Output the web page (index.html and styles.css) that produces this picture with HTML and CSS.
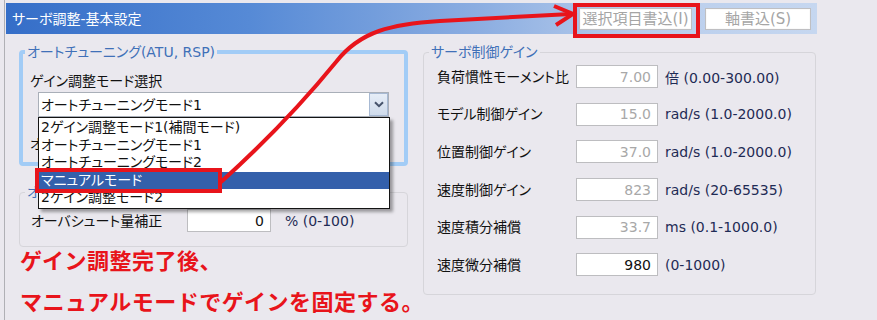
FILE: index.html
```html
<!DOCTYPE html>
<html lang="ja">
<head>
    <meta charset="UTF-8">
    <meta name="viewport" content="width=device-width, initial-scale=1.0">
    <title>サーボ調整-基本設定</title>
    <link rel="stylesheet" href="styles.css">
</head>
<body>
    <div class="window">
        <div class="titlebar">
            <span class="title">サーボ調整-基本設定</span>
            <div class="tb-buttons">
                <button class="tb-btn wide" disabled>選択項目書込(I)</button>
                <button class="tb-btn" disabled>軸書込(S)</button>
            </div>
        </div>

        <div class="content">
            <div class="col-left">
                <fieldset class="grp focus">
                    <legend>オートチューニング(ATU, RSP)</legend>
                    <div class="grp-body atu">
                        <div class="lbl">ゲイン調整モード選択</div>
                        <div class="combo">
                            <span class="combo-text">オートチューニングモード1</span>
                            <span class="combo-btn">
                                <svg width="10" height="7" viewBox="0 0 10 7"><path d="M1 1.2 L5 5.2 L9 1.2" fill="none" stroke="#46536b" stroke-width="2"/></svg>
                            </span>
                            <ul class="combo-list">
                                <li>2ゲイン調整モード1(補間モード)</li>
                                <li>オートチューニングモード1</li>
                                <li>オートチューニングモード2</li>
                                <li class="sel">マニュアルモード</li>
                                <li>2ゲイン調整モード2</li>
                            </ul>
                        </div>
                        <!-- rest of this label is hidden behind the open list -->
                        <div class="lbl under">オ</div>
                    </div>
                </fieldset>

                <fieldset class="grp over">
                    <legend class="under-list">オ</legend>
                    <div class="grp-body row">
                        <span class="lbl over-lbl">オーバシュート量補正</span>
                        <input class="num over-num" type="text" value="0">
                        <span class="unit over-unit">% (0-100)</span>
                    </div>
                </fieldset>

                <div class="note">
                    <p>ゲイン調整完了後、</p>
                    <p>マニュアルモードでゲインを固定する。</p>
                </div>
            </div>

            <fieldset class="grp gains">
                <legend>サーボ制御ゲイン</legend>
                <div class="grp-body rows">
                    <div class="row"><span class="lbl gl">負荷慣性モーメント比</span><input class="num dis" type="text" value="7.00" readonly><span class="unit">倍 (0.00-300.00)</span></div>
                    <div class="row"><span class="lbl gl">モデル制御ゲイン</span><input class="num dis" type="text" value="15.0" readonly><span class="unit">rad/s (1.0-2000.0)</span></div>
                    <div class="row"><span class="lbl gl">位置制御ゲイン</span><input class="num dis" type="text" value="37.0" readonly><span class="unit">rad/s (1.0-2000.0)</span></div>
                    <div class="row"><span class="lbl gl">速度制御ゲイン</span><input class="num dis" type="text" value="823" readonly><span class="unit">rad/s (20-65535)</span></div>
                    <div class="row"><span class="lbl gl">速度積分補償</span><input class="num dis" type="text" value="33.7" readonly><span class="unit">ms (0.1-1000.0)</span></div>
                    <div class="row"><span class="lbl gl">速度微分補償</span><input class="num" type="text" value="980"><span class="unit">(0-1000)</span></div>
                </div>
            </fieldset>
        </div>
    </div>

    <!-- annotation layer -->
    <svg class="marks" width="877" height="320" viewBox="0 0 877 320">
        <rect x="575" y="5" width="123" height="31" fill="none" stroke="#e8141b" stroke-width="4"/>
        <rect x="37" y="170" width="183" height="21" fill="none" stroke="#e8141b" stroke-width="4"/>
        <path d="M221 182 C262 145 305 100 336 62 C360 31 392 24 440 21 L571 14" fill="none" stroke="#e8141b" stroke-width="4"/>
        <path d="M554 6 L573 14 L556 25" fill="none" stroke="#e8141b" stroke-width="4"/>
    </svg>
</body>
</html>
```

FILE: styles.css
```css
body {
    margin: 0;
    background-color: #eae8ee;
    font-family: "DejaVu Sans", "Noto Sans CJK JP", sans-serif;
    font-size: 14px;
    font-feature-settings: "palt" 1;
    color: #111;
    width: 877px;
    height: 320px;
    overflow: hidden;
}
.window {
    margin-left: 4px;
    border-left: 1px solid #b0b0b5;
    height: 320px;
    padding-top: 3px;
    box-sizing: border-box;
}
.titlebar {
    margin-left: 1px;
    width: 811px;
    height: 31px;
    display: flex;
    align-items: center;
    padding: 0 6px;
    box-sizing: border-box;
    background: linear-gradient(90deg, #356ec8 0%, #568ad6 30%, #8badE1 58%, #b8cdec 78%, #c6d7f0 100%);
}
.title {
    color: #fff;
    line-height: 16px;
}
.tb-buttons {
    margin-left: auto;
    display: flex;
    gap: 13px;
}
.tb-btn {
    width: 106px;
    height: 22px;
    padding: 0;
    font: inherit;
    font-size: 15px;
    line-height: 18px;
    color: #a5a5a5;
    background: #fff;
    border: 1px solid #bfbfc2;
    box-shadow: inset 0 0 0 1px #fafafa;
}
.tb-btn.wide {
    width: 113px;
}

.content {
    display: flex;
    gap: 15px;
    padding: 10px 0 0 14px;
}
.col-left {
    width: 389px;
}

fieldset.grp {
    margin: 0;
    padding: 0;
    min-width: 0;
    box-sizing: border-box;
    border: 1px solid #d6d5da;
    border-radius: 4px;
}
.grp legend {
    padding: 0 2px;
    line-height: 16px;
    color: #4070b8;
}
.grp.focus {
    border: 4px solid #a2ccf6;
}
.grp.focus legend {
    margin-left: 2px;
}
.grp.over legend,
.gains legend {
    margin-left: 5px;
}
.grp.over legend.under-list {
    padding-right: 14px;
}
.grp.over {
    margin-top: 18px;
}
.lbl {
    line-height: 16px;
    white-space: nowrap;
}

.atu {
    padding: 13px 15px 10px 7px;
}
.combo {
    position: relative;
    margin: 3px 0 0 8px;
    height: 25px;
    box-sizing: border-box;
    border: 1px solid #a9afb8;
    background: #fff;
    display: flex;
    align-items: center;
}
.combo-text {
    flex: 1;
    padding-left: 2px;
    line-height: 16px;
}
.combo-btn {
    width: 19px;
    height: 23px;
    box-sizing: border-box;
    border: 1px solid #a7b9d3;
    background: linear-gradient(#e6edf7, #cfdbeb);
    display: flex;
    align-items: center;
    justify-content: center;
}
.combo-list {
    position: absolute;
    left: -1px;
    top: calc(100% + 1px);
    width: 352px;
    margin: 0;
    padding: 1px 0;
    list-style: none;
    box-sizing: border-box;
    background: #fff;
    border: 1px solid #141414;
    box-shadow: 3px 3px 3px rgba(0, 0, 0, 0.35);
    z-index: 10;
}
.combo-list li {
    height: 17.5px;
    line-height: 17.5px;
    padding-left: 2px;
    white-space: nowrap;
}
.combo-list li.sel {
    background: #3460ab;
    color: #fff;
}
.under {
    margin-top: 19px;
}

.row {
    display: flex;
    align-items: center;
}
.grp-body.row {
    padding: 9px 11px 14px 11px;
}
.over-lbl {
    width: 156px;
}
.num {
    width: 82px;
    height: 23px;
    box-sizing: border-box;
    margin: 0;
    border: 1px solid #bdbdc0;
    background: #fff;
    padding: 0 6px 0 0;
    text-align: right;
    font-family: "DejaVu Sans", sans-serif;
    font-size: 14px;
    color: #111;
    outline: none;
}
.over-num {
    width: 84px;
}
.num.dis {
    color: #a8a8a8;
}
.unit {
    margin-left: 7px;
    font-size: 14px;
    color: #1f2b55;
    white-space: nowrap;
}
.over-unit {
    margin-left: 14px;
}

.note {
    margin-top: 0;
    padding-left: 1px;
    color: #e8141b;
    font-family: "Noto Sans CJK JP", sans-serif;
    font-feature-settings: normal;
    font-size: 22px;
    font-weight: bold;
    letter-spacing: 0.5px;
    white-space: nowrap;
}
.note p {
    margin: 0;
    line-height: 24px;
}
.note p + p {
    margin-top: 17px;
}

.gains {
    width: 393px;
    height: 251px;
}
.rows {
    display: flex;
    flex-direction: column;
    gap: 14.7px;
    padding: 5px 0 0 13px;
}
.rows .row {
    height: 23px;
}
.gl {
    width: 139px;
}

.marks {
    position: absolute;
    left: 0;
    top: 0;
    pointer-events: none;
    z-index: 20;
}
```
